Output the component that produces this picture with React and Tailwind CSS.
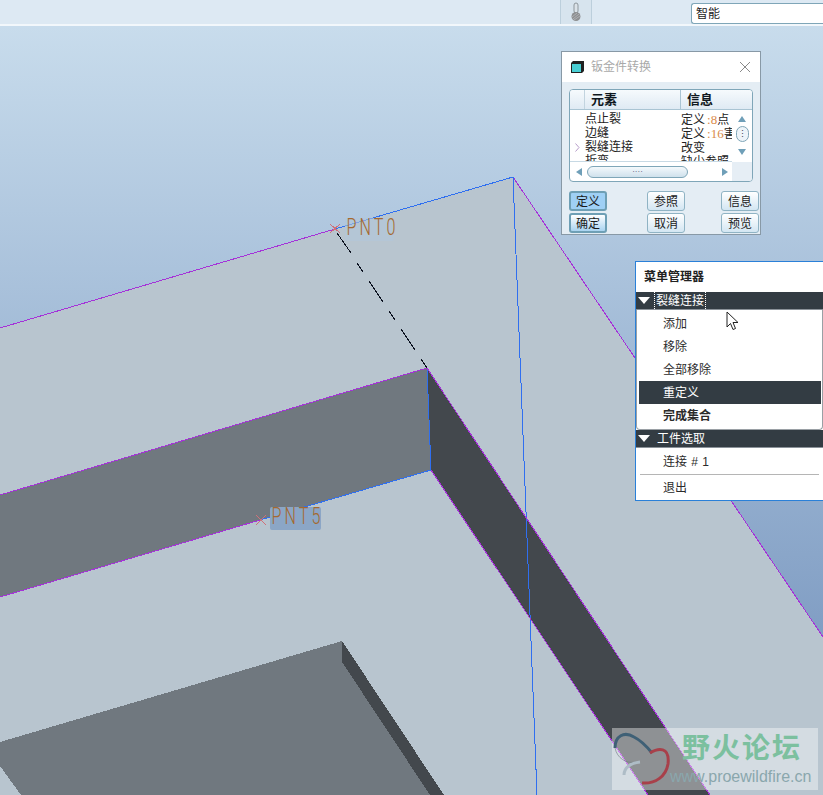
import React from "react";

const cjk = "font-['Liberation_Sans','Noto_Sans_CJK_SC',sans-serif]";

function Canvas() {
  return (
    <svg viewBox="0 0 823 769" className="block w-[823px] h-[769px]" shapeRendering="crispEdges">
      <g transform="translate(0,-26)">
        <polygon points="0,328 513,177 823,637 823,795 0,795" fill="#b8c5cf" />
        <polygon points="0,495 427,368 431,470 0,597" fill="#70787f" />
        <polygon points="427,368 710,795 648,795 431,470" fill="#43484d" />
        <polygon points="0,742 342,641 342,662 430,795 0,795" fill="#70787f" />
        <polygon points="342,641 444,795 430,795 342,662" fill="#43484d" />
        <polygon points="0,766 21,795 0,795" fill="#b8c5cf" />
        <g fill="none" strokeWidth="1">
          <path d="M0 328L335 229" stroke="#a532d8" />
          <path d="M335 229L513 177" stroke="#2f6ff0" />
          <path d="M513 177L823 637" stroke="#a532d8" />
          <path d="M513 177L537 795" stroke="#2f6ff0" />
          <path d="M0 495L427 368" stroke="#a532d8" />
          <path d="M427 368L431 470" stroke="#2f6ff0" />
          <path d="M0 597L260 520" stroke="#a532d8" />
          <path d="M260 520L431 470" stroke="#2f6ff0" />
          <path d="M427 368L710 795" stroke="#a532d8" />
          <path d="M431 470L648 795" stroke="#a532d8" />
          <path d="M337 233L351 253M357 263L363 272M369 281L383 302M389 311L395 320M401 329L415 350M421 359L427 368" stroke="#0b1220" />
          <path d="M330 224L340 233M340 224L330 233" stroke="#d0707a" />
          <path d="M256 515L266 525M266 515L256 525" stroke="#d0707a" />
        </g>
      </g>
    </svg>
  );
}

function SmallBtn({ children, active, strong }) {
  const bg = active ? "bg-[#9fd0f5]" : strong ? "bg-gradient-to-b from-[#ffffff] to-[#a9d3f0]" : "bg-gradient-to-b from-[#ffffff] to-[#d3e6f2]";
  const bd = active || strong ? "border-2 border-[#6e9fb5]" : "border border-[#8fb3c4]";
  return (
    <div className={`w-[38px] h-[20px] pt-[1px] flex items-center justify-center rounded-[3px] text-[12px] leading-none text-[#1a1a1a] ${bg} ${bd}`}>
      {children}
    </div>
  );
}

function Dialog() {
  const rows = [
    ["点止裂", "定义", ":8", "点"],
    ["边缝", "定义", ":16", "害"],
    ["裂缝连接", "改变", "", ""],
    ["折弯", "缺少参照", "", ""],
  ];
  return (
    <div className={`absolute left-[561px] top-[25px] w-[200px] h-[184px] border border-[#8899a6] bg-[#e4edf4] flex flex-col ${cjk}`}>
      <div className="h-[30px] bg-white flex items-center pl-[9px] pr-[9px] shrink-0">
        <svg viewBox="0 0 13 12" className="w-[13px] h-[12px] shrink-0">
          <path d="M0 2L2 0H13V10L11 12H0Z" fill="#222" />
          <rect x="1" y="3" width="9" height="8" fill="#49cfd4" />
        </svg>
        <span className="ml-[7px] text-[12px] text-[#a9a9a9] leading-none">钣金件转换</span>
        <svg viewBox="0 0 12 12" className="ml-auto w-[12px] h-[12px]" fill="none" stroke="#8a8a8a" strokeWidth="1">
          <path d="M1 1L11 11M11 1L1 11" />
        </svg>
      </div>
      <div className="mx-[7px] mt-[7px] h-[93px] w-[184px] rounded-[4px] border border-[#7fa6b8] bg-white overflow-hidden flex flex-col shrink-0">
        <div className="h-[20px] flex items-center bg-gradient-to-b from-[#f6fafd] to-[#dfeaf3] border-b border-[#a9c4d3] text-[13px] font-bold text-[#101820] leading-none shrink-0">
          <div className="w-[15px] h-full border-r border-[#c2d4df]" />
          <div className="w-[96px] h-full flex items-center pl-[6px] border-r border-[#a9c4d3]">元素</div>
          <div className="pl-[6px]">信息</div>
        </div>
        <div className="flex h-[52px] shrink-0">
          <div className="w-[162px] h-[52px] overflow-hidden border-b border-[#c7d9e4] pt-[2px]">
            {rows.map((r, i) => (
              <div key={r[0]} className="flex h-[14px] items-center text-[12px] leading-none text-[#222]">
                <div className="w-[15px] pl-[5px]">
                  {i === 2 && (
                    <svg viewBox="0 0 5 9" className="w-[5px] h-[9px]" fill="none" stroke="#b79cc9">
                      <path d="M0.5 0.5L4 4.5L0.5 8.5" />
                    </svg>
                  )}
                </div>
                <div className="w-[96px] whitespace-nowrap">{r[0]}</div>
                <div className="w-[51px] whitespace-nowrap overflow-hidden">
                  {r[1]}
                  <span className="ml-[2px] text-[#d98a4a] font-['Liberation_Serif',serif] text-[13px]">{r[2]}</span>
                  {r[3]}
                </div>
              </div>
            ))}
          </div>
          <div className="w-[20px] flex flex-col items-center bg-white">
            <svg viewBox="0 0 8 6" className="w-[8px] h-[6px] mt-[6px]"><path d="M4 0L8 6H0Z" fill="#6f9fb8" /></svg>
            <div className="mt-[4px] w-[13px] h-[16px] rounded-full border border-[#7fa6b8] bg-[#edf4f9] flex items-center justify-center text-[9px] leading-none text-[#445]">⋮</div>
            <svg viewBox="0 0 8 6" className="w-[8px] h-[6px] mt-[7px]"><path d="M0 0H8L4 6Z" fill="#6f9fb8" /></svg>
          </div>
        </div>
        <div className="flex flex-1 items-center">
          <div className="w-[162px] flex items-center pl-[6px]">
            <svg viewBox="0 0 6 8" className="w-[6px] h-[8px]"><path d="M6 0V8L0 4Z" fill="#6f9fb8" /></svg>
            <div className="ml-[5px] w-[101px] h-[12px] rounded-full border border-[#7fa6b8] bg-gradient-to-b from-[#f4f9fc] to-[#cfe1ec] flex items-center justify-center text-[8px] leading-none text-[#446]">
              ····
            </div>
            <svg viewBox="0 0 6 8" className="ml-auto mr-[4px] w-[6px] h-[8px]"><path d="M0 0V8L6 4Z" fill="#6f9fb8" /></svg>
          </div>
          <div className="flex-1 h-full bg-[#e6eef5]" />
        </div>
      </div>
      <div className="mt-[9px] ml-[7px] w-[190px] grid grid-cols-[78px_74px_38px] gap-y-[2px]">
        <SmallBtn active>定义</SmallBtn>
        <SmallBtn>参照</SmallBtn>
        <SmallBtn>信息</SmallBtn>
        <SmallBtn strong>确定</SmallBtn>
        <SmallBtn>取消</SmallBtn>
        <SmallBtn>预览</SmallBtn>
      </div>
    </div>
  );
}

function Tri() {
  return (
    <svg viewBox="0 0 12 7" className="w-[12px] h-[7px] shrink-0">
      <path d="M0 0H12L6 7Z" fill="#fff" />
    </svg>
  );
}

function MenuItem({ children, sel, bold, h = "h-[23px]" }) {
  return (
    <div className={`${h} flex items-center pl-[24px] text-[12px] leading-none ${sel ? "bg-[#333c43] text-white" : "text-[#2b2b2b]"} ${bold ? "font-bold" : ""}`}>
      {children}
    </div>
  );
}

function Menu() {
  return (
    <div className={`absolute left-[635px] top-[235px] w-[188px] h-[240px] bg-white border border-[#2a80d8] border-r-0 flex flex-col ${cjk}`}>
      <div className="h-[30px] flex items-center pl-[8px] text-[12px] font-bold text-[#222] leading-none shrink-0">菜单管理器</div>
      <div className="h-[18px] bg-[#333c43] flex items-center pl-[2px] text-[12px] text-white leading-none shrink-0 border-b border-[#8b9299]">
        <Tri />
        <span className="ml-[4px] px-[1px] h-full flex items-center border-x border-dotted border-white">裂缝连接</span>
      </div>
      <div className="h-[120px] pt-[2px] pl-[2px] pr-[1px] rounded-b-[4px] border-x border-b border-[#9aa0a5] shrink-0">
        <MenuItem>添加</MenuItem>
        <MenuItem>移除</MenuItem>
        <MenuItem>全部移除</MenuItem>
        <MenuItem sel>重定义</MenuItem>
        <MenuItem bold>完成集合</MenuItem>
      </div>
      <div className="h-[18px] bg-[#333c43] flex items-center pl-[2px] text-[12px] text-white leading-none shrink-0 border-b border-[#8b9299]">
        <Tri />
        <span className="ml-[7px]">工件选取</span>
      </div>
      <div className="pl-[3px] pt-[1px] shrink-0 [word-spacing:1px]">
        <MenuItem h="h-[25px]">连接 # 1</MenuItem>
      </div>
      <div className="mx-[4px] h-px bg-[#b5b5b5] shrink-0" />
      <div className="pl-[3px] shrink-0">
        <MenuItem h="h-[26px]">退出</MenuItem>
      </div>
    </div>
  );
}

function Label({ text, cls }) {
  return (
    <div className={`absolute rounded-[2px] ${cls}`}>
      <div className="font-['Roboto',sans-serif] font-light text-[23px] tracking-[4.5px] leading-[20px] text-[#a5692f] origin-left scale-x-[0.7] whitespace-nowrap pl-[2px]">
        {text}
      </div>
    </div>
  );
}

function Watermark() {
  return (
    <div className="absolute left-[612px] top-[702px] w-[206px] h-[62px] bg-[#ffffff]/40">
      <svg viewBox="0 0 70 62" className="absolute left-0 top-0 w-[70px] h-[62px]" fill="none">
        <path d="M3 20C3 8 12 3 22 9C30 13 36 20 40 25" stroke="#3f6076" strokeWidth="3" />
        <path d="M3 20C5 30 14 36 24 34" stroke="#6f7a80" strokeWidth="1" opacity="0.6" />
        <path d="M38 25C46 20 58 18 56 36C54 48 44 56 30 55" stroke="#a8404a" strokeWidth="3" />
        <path d="M12 47C12 40 18 35 28 34" stroke="#aebcc6" strokeWidth="3" />
      </svg>
      <div className={`absolute left-[70px] top-[5px] text-[28px] leading-[32px] font-bold tracking-[2px] text-[#7cc09f] whitespace-nowrap ${cjk}`}>
        野火论坛
      </div>
      <div className="absolute left-[58px] top-[40px] text-[16px] leading-[18px] font-['Liberation_Sans',sans-serif] text-[#8aa7ad] whitespace-nowrap">
        www.proewildfire.cn
      </div>
    </div>
  );
}

export default function App() {
  return (
    <div className={`w-[823px] h-[795px] overflow-hidden flex flex-col ${cjk}`}>
      <div className="h-[26px] shrink-0 flex items-stretch bg-[#dde9f3] border-b-2 border-[#f2f7fb]">
        <div className="w-[560px] shrink-0" />
        <div className="w-[32px] shrink-0 border-x border-[#bccfdc] flex items-center justify-center bg-[#d7e4ee]">
          <svg viewBox="0 0 12 20" className="w-[12px] h-[20px]">
            <rect x="4" y="1" width="4" height="10" rx="2" fill="#dbe3e9" stroke="#8d969c" />
            <circle cx="6" cy="14.5" r="4.5" fill="#8d8f91" />
            <path d="M3 17L9 12M4 18L10 14M2 15L7 11" stroke="#bdbfc1" strokeWidth="0.7" />
          </svg>
        </div>
        <div className="w-[99px] shrink-0" />
        <div className="flex-1 mt-[3px] bg-white border border-[#7fa6b8] border-r-0 rounded-l-[3px] pl-[4px] flex items-center text-[12px] leading-none text-[#222]">
          智能
        </div>
      </div>
      <div className="relative h-[769px] bg-gradient-to-b from-[#c8dcec] to-[#6f8eb9]">
        <Canvas />
        <Label text="PNT0" cls="left-[345px] top-[192px] w-[49px] h-[23px] bg-[#b1c6da]/60" />
        <Label text="PNT5" cls="left-[270px] top-[481px] w-[51px] h-[23px] bg-[#8ba6c6]" />
        <Dialog />
        <Menu />
        <svg viewBox="0 0 14 20" className="absolute left-[726px] top-[285px] w-[14px] h-[20px]">
          <path d="M1 1V16L4.5 12.5L7 18.5L9.5 17.5L7 11.5H12Z" fill="#fff" stroke="#222" strokeWidth="1" />
        </svg>
        <Watermark />
      </div>
    </div>
  );
}
